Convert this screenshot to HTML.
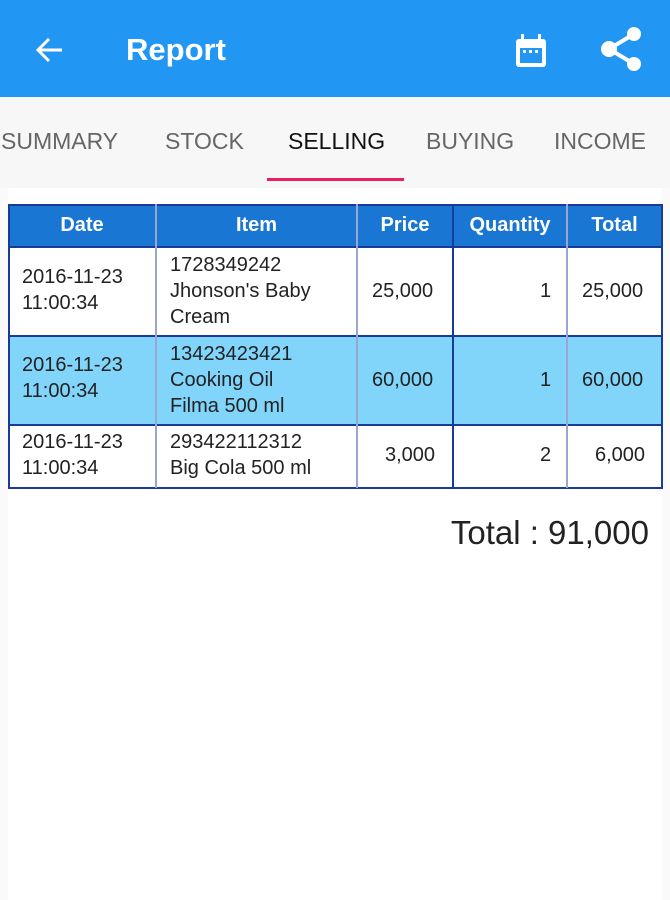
<!DOCTYPE html>
<html><head><meta charset="utf-8"><style>
*{margin:0;padding:0;box-sizing:border-box}
body{width:670px;height:900px;background:#fafafa;font-family:"Liberation Sans",sans-serif;position:relative;overflow:hidden}
.bar{position:absolute;left:0;top:0;width:670px;height:97px;background:#2196F3}
.title{position:absolute;left:126px;top:32px;color:#fff;font-size:31px;font-weight:bold}
.tabs{position:absolute;left:0;top:97px;width:670px;height:91px;background:#f7f7f7}
.tab{position:absolute;top:128px;font-size:23px;color:#666;}
.ind{position:absolute;left:267px;top:178px;width:137px;height:3px;background:#e91e63}
.panel{position:absolute;left:8px;top:188px;width:654px;height:712px;background:#fff}
.c{position:absolute;font-size:20px;color:#222;line-height:26px}
.h{position:absolute;top:204px;height:43px;line-height:43px;color:#fff;font-weight:bold;font-size:20px;text-align:center}
.v{position:absolute;top:204px;width:2px;height:284px;background:#9aa6cf}
</style></head><body>
<div class="bar"></div>
<svg style="position:absolute;left:34px;top:36px" width="32" height="28" viewBox="0 0 32 28"><path d="M28 14H5M15 3L4 14l11 11" stroke="#fff" stroke-width="3" fill="none"/></svg>
<div class="title">Report</div>
<svg style="position:absolute;left:513px;top:32px" width="36" height="38" viewBox="0 0 36 38"><rect x="3" y="7" width="30" height="28" rx="3" fill="#fff"/><rect x="8" y="2" width="3" height="8" fill="#fff"/><rect x="25" y="2" width="3" height="8" fill="#fff"/><rect x="7" y="16" width="22" height="15" fill="#2196F3"/><rect x="10" y="18" width="3" height="3" fill="#fff"/><rect x="16" y="18" width="3" height="3" fill="#fff"/><rect x="22" y="18" width="3" height="3" fill="#fff"/></svg>
<svg style="position:absolute;left:598px;top:25px" width="48" height="48" viewBox="0 0 48 48"><path d="M36 9L11 24l25 15" stroke="#fff" stroke-width="4" fill="none"/><circle cx="36" cy="9" r="7" fill="#fff"/><circle cx="11" cy="24" r="8" fill="#fff"/><circle cx="36" cy="39" r="7" fill="#fff"/></svg>
<div class="tabs"></div>
<div class="tab" style="left:1px">SUMMARY</div>
<div class="tab" style="left:165px">STOCK</div>
<div class="tab" style="left:288px;color:#111">SELLING</div>
<div class="tab" style="left:426px">BUYING</div>
<div class="tab" style="left:554px">INCOME</div>
<div class="ind"></div>
<div class="panel"></div>
<div style="position:absolute;left:8px;top:204px;width:654px;height:43px;background:#1976D2"></div>
<div style="position:absolute;left:8px;top:336px;width:654px;height:89px;background:#81d4fa"></div>
<div style="position:absolute;left:8px;top:204px;width:655px;height:285px;border:2px solid #1a3a9a"></div>
<div style="position:absolute;left:8px;top:246px;width:654px;height:2px;background:#1a3a9a"></div>
<div style="position:absolute;left:8px;top:335px;width:654px;height:2px;background:#1a3a9a"></div>
<div style="position:absolute;left:8px;top:424px;width:654px;height:2px;background:#1a3a9a"></div>
<div class="v" style="left:155px"></div><div class="v" style="left:356px"></div><div class="v" style="left:452px;background:#1a3a9a"></div><div class="v" style="left:566px"></div>
<div class="h" style="left:8px;width:148px">Date</div>
<div class="h" style="left:156px;width:201px">Item</div>
<div class="h" style="left:357px;width:96px">Price</div>
<div class="h" style="left:453px;width:114px">Quantity</div>
<div class="h" style="left:567px;width:95px">Total</div>

<div class="c" style="left:22px;top:264px">2016-11-23<br>11:00:34</div>
<div class="c" style="left:170px;top:252px">1728349242<br>Jhonson's Baby<br>Cream</div>
<div class="c" style="left:372px;top:278px">25,000</div>
<div class="c" style="left:540px;top:278px">1</div>
<div class="c" style="left:582px;top:278px">25,000</div>

<div class="c" style="left:22px;top:352px">2016-11-23<br>11:00:34</div>
<div class="c" style="left:170px;top:341px">13423423421<br>Cooking Oil<br>Filma 500 ml</div>
<div class="c" style="left:372px;top:367px">60,000</div>
<div class="c" style="left:540px;top:367px">1</div>
<div class="c" style="left:582px;top:367px">60,000</div>

<div class="c" style="left:22px;top:429px">2016-11-23<br>11:00:34</div>
<div class="c" style="left:170px;top:429px">293422112312<br>Big Cola 500 ml</div>
<div class="c" style="left:385px;top:442px">3,000</div>
<div class="c" style="left:540px;top:442px">2</div>
<div class="c" style="left:595px;top:442px">6,000</div>

<div style="position:absolute;right:21px;top:514px;font-size:33px;color:#222">Total : 91,000</div>
</body></html>
